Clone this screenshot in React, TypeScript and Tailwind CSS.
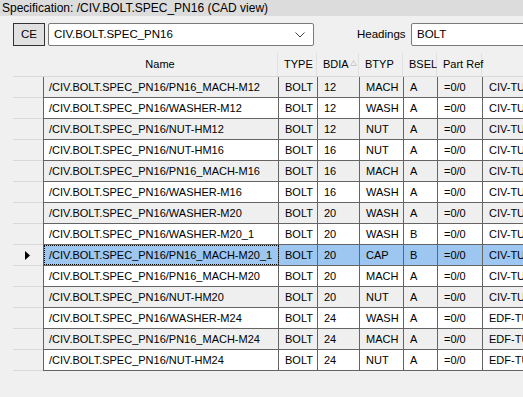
import React from "react";

const rows: [string, string, string, string, string, string, string][] = [
  ["/CIV.BOLT.SPEC_PN16/PN16_MACH-M12", "BOLT", "12", "MACH", "A", "=0/0", "CIV-TUBE"],
  ["/CIV.BOLT.SPEC_PN16/WASHER-M12", "BOLT", "12", "WASH", "A", "=0/0", "CIV-TUBE"],
  ["/CIV.BOLT.SPEC_PN16/NUT-HM12", "BOLT", "12", "NUT", "A", "=0/0", "CIV-TUBE"],
  ["/CIV.BOLT.SPEC_PN16/NUT-HM16", "BOLT", "16", "NUT", "A", "=0/0", "CIV-TUBE"],
  ["/CIV.BOLT.SPEC_PN16/PN16_MACH-M16", "BOLT", "16", "MACH", "A", "=0/0", "CIV-TUBE"],
  ["/CIV.BOLT.SPEC_PN16/WASHER-M16", "BOLT", "16", "WASH", "A", "=0/0", "CIV-TUBE"],
  ["/CIV.BOLT.SPEC_PN16/WASHER-M20", "BOLT", "20", "WASH", "A", "=0/0", "CIV-TUBE"],
  ["/CIV.BOLT.SPEC_PN16/WASHER-M20_1", "BOLT", "20", "WASH", "B", "=0/0", "CIV-TUBE"],
  ["/CIV.BOLT.SPEC_PN16/PN16_MACH-M20_1", "BOLT", "20", "CAP", "B", "=0/0", "CIV-TUBE"],
  ["/CIV.BOLT.SPEC_PN16/PN16_MACH-M20", "BOLT", "20", "MACH", "A", "=0/0", "CIV-TUBE"],
  ["/CIV.BOLT.SPEC_PN16/NUT-HM20", "BOLT", "20", "NUT", "A", "=0/0", "CIV-TUBE"],
  ["/CIV.BOLT.SPEC_PN16/WASHER-M24", "BOLT", "24", "WASH", "A", "=0/0", "EDF-TUBE"],
  ["/CIV.BOLT.SPEC_PN16/PN16_MACH-M24", "BOLT", "24", "MACH", "A", "=0/0", "EDF-TUBE"],
  ["/CIV.BOLT.SPEC_PN16/NUT-HM24", "BOLT", "24", "NUT", "A", "=0/0", "EDF-TUBE"],
];

const widths = ["w-[235px]", "w-[39px]", "w-[42px]", "w-[44px]", "w-[34px]", "w-[45px]", "w-[100px]"];
const headers = ["Name", "TYPE", "BDIA", "BTYP", "BSEL", "Part Ref", ""];

export default function App() {
  return (
    <div
      className="w-[523px] h-[397px] overflow-hidden bg-[#f0f0f0] text-[11px] text-black leading-none"
      style={{ fontFamily: '"Liberation Sans", Arial, sans-serif' }}
    >
      <div className="h-[16px] bg-[#dcdcdc] flex items-center pl-[2px] whitespace-nowrap text-[12px]">
        Specification: /CIV.BOLT.SPEC_PN16 (CAD view)
      </div>
      <div className="pl-[13px] pt-[7px] flex items-center whitespace-nowrap text-[11.5px] w-[700px]">
        <div className="w-[32px] h-[23px] shrink-0 border border-[#333] bg-[#e1e1e1] flex items-center justify-center">
          CE
        </div>
        <div className="ml-[3px] w-[266px] h-[23px] shrink-0 border border-[#7a7a7a] rounded-[2px] bg-white flex items-center pl-[5px] pr-[6px]">
          <span className="flex-1">CIV.BOLT.SPEC_PN16</span>
          <svg width="10" height="6" viewBox="0 0 10 6" className="mr-[2px]">
            <path d="M0.5 0.5 L5 5 L9.5 0.5" fill="none" stroke="#444" strokeWidth="1" />
          </svg>
        </div>
        <div className="ml-[43px] w-[54px] shrink-0">Headings</div>
        <div className="w-[120px] h-[23px] border border-[#7a7a7a] rounded-[2px] bg-white flex items-center pl-[5px] shrink-0">
          BOLT
        </div>
      </div>
      <div className="pl-[13px] mt-[6px] whitespace-nowrap">
        <div className="flex h-[25px] border-b border-[#d9d9d9] w-[700px]">
          <div className="w-[30px] shrink-0" />
          {headers.map((h, i) => (
            <div
              key={i}
              className={`${widths[i]} shrink-0 h-[23px] self-end border-r border-[#e0e0e0] flex items-center ${
                i === 0 ? "justify-center" : "pl-[6px]"
              }`}
            >
              {h}
              {h === "BDIA" && (
                <svg width="7" height="6" viewBox="0 0 7 6" className="ml-[1px] mb-[4px]">
                  <path d="M0.5 5.5 L3.5 0.5 L6.5 5.5 Z" fill="none" stroke="#c8c8c8" strokeWidth="1" />
                </svg>
              )}
            </div>
          ))}
        </div>
        {rows.map((r, ri) => {
          const sel = ri === 8;
          const bg = sel ? "bg-[#9dc6f1]" : ri % 2 === 0 ? "bg-[#efefef]" : "bg-white";
          return (
            <div key={ri} className="flex h-[21px] w-[700px]">
              <div className="w-[30px] shrink-0 border-b border-[#d9d9d9] flex items-center justify-center">
                {sel && (
                  <svg width="5" height="9" viewBox="0 0 5 9" className="ml-[-2px]">
                    <path d="M0 0 L5 4.5 L0 9 Z" fill="#000" />
                  </svg>
                )}
              </div>
              <div className={`flex ${bg} border-l border-b border-[#646464]`}>
                {r.map((c, ci) => (
                  <div
                    key={ci}
                    className={`${widths[ci]} ${ci === 0 ? "w-[234px]" : ""} shrink-0 h-[20px] border-r border-[#646464] flex items-center overflow-hidden ${
                      ci === 0 ? "pl-[5px]" : "pl-[6px]"
                    } ${sel && ci === 0 ? "outline outline-1 outline-dotted outline-black -outline-offset-1" : ""}`}
                  >
                    {c}
                  </div>
                ))}
              </div>
            </div>
          );
        })}
      </div>
    </div>
  );
}
